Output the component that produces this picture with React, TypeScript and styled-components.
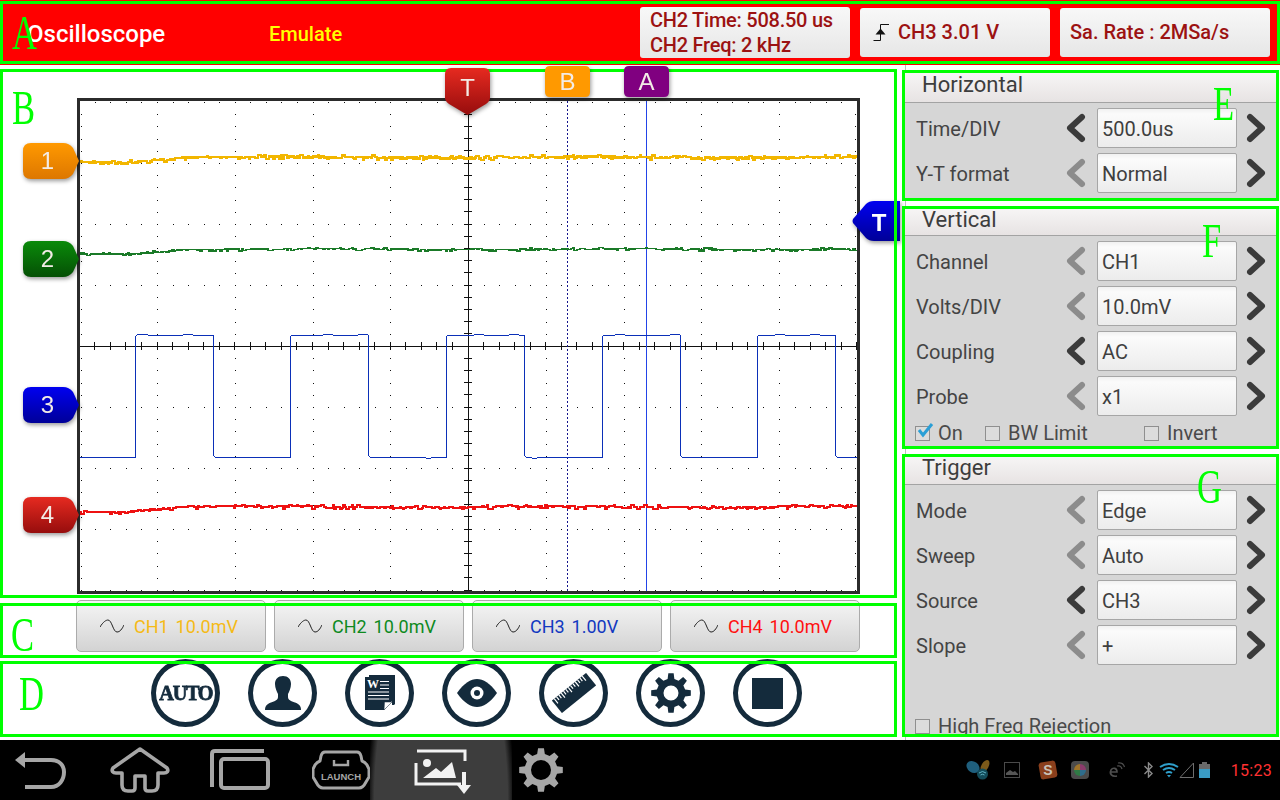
import React from "react";
import styled, { createGlobalStyle } from "styled-components";

const GlobalStyle = createGlobalStyle`
  html, body {
    margin: 0;
    padding: 0;
    background: #fff;
    font-family: Roboto, "Liberation Sans", sans-serif;
  }
`;

const DARK = "#142b3c";

// ---------- chart data ----------

const seeded = (seed: number) => {
  let s = seed;
  return () => {
    s = (s * 16807) % 2147483647;
    return s / 2147483647;
  };
};

const noisyTrace = (seed: number, start: number, end: number, spread: number) => {
  const rnd = seeded(seed);
  let d = `M80 ${start} `;
  let x = 80;
  while (x < 857) {
    const hold = 1 + Math.floor(rnd() * 3);
    const t = Math.min(1, Math.max(0, (x - 125) / 60));
    const wander = Math.sin(x / 47 + seed) * 0.5;
    let y = start + (end - start) * t + wander;
    const r = rnd();
    if (r > 0.9) y += spread * 2.4;
    else if (r < 0.1) y -= spread * 1.4;
    else if (r > 0.6) y += spread;
    const next = Math.min(857, x + hold);
    d += `L${x} ${y.toFixed(1)} L${next} ${y.toFixed(1)} `;
    x = next;
  }
  return d;
};

const squareTrace = () => {
  const edges = [135, 213, 290, 368, 446, 524, 602, 680, 757, 835];
  const rnd = seeded(77);
  let d = "M80 457 ";
  let high = false;
  let last = 80;
  const flat = (from: number, to: number, y: number) => {
    for (let x = from; x < to; x += 5) {
      d += `L${x} ${y + (rnd() > 0.8 ? (high ? -1 : 1) : 0)} `;
    }
    d += `L${to} ${y} `;
  };
  edges.forEach((x) => {
    flat(last + 3, x, high ? 335 : 457);
    if (high) d += `L${x} 455 L${x + 2} 457 `;
    else d += `L${x} 337 L${x + 2} 335 `;
    high = !high;
    last = x;
  });
  flat(last + 3, 857, high ? 335 : 457);
  return d;
};

const range = (from: number, to: number, step: number) => {
  const out: number[] = [];
  for (let v = from; v <= to; v += step) out.push(v);
  return out;
};

const CX = 468;
const CY = 346;
const STEP_X = 15.55;
const STEP_Y = 12.2;
const colsX = [-4, -3, -2, -1, 1, 2, 3, 4, 5].map((k) => CX + k * 77.75);
const rowsY = [-3, -2, -1, 1, 2, 3].map((k) => CY + k * 61);
const tickXs = range(-25, 25, 1).map((k) => CX + k * STEP_X).filter((x) => x > 81 && x < 857);
const tickYs = range(-20, 20, 1).map((k) => CY + k * STEP_Y).filter((y) => y > 102 && y < 592);

const dot = (x: number, y: number) => `M${Math.round(x)} ${Math.round(y)}h1v1h-1z `;

const gridDots = () => {
  let d = "";
  rowsY.concat([102, 590]).forEach((y) => tickXs.forEach((x) => (d += dot(x, y))));
  colsX.concat([81, 855]).forEach((x) => tickYs.forEach((y) => (d += dot(x, y))));
  return d;
};

const axisTicks = () => {
  let d = `M80 ${CY}H857 M${CX} 101V592 `;
  tickXs.forEach((x) => (d += `M${x.toFixed(1)} ${CY - 4}v8 `));
  tickYs.forEach((y) => (d += `M${CX - 4} ${y.toFixed(1)}h8 `));
  return d;
};

const gearPath = (cx: number, cy: number, ro: number, rb: number, hole: number, teeth = 8) => {
  let d = "";
  const seg = (Math.PI * 2) / teeth;
  for (let i = 0; i < teeth; i += 1) {
    const a = i * seg - Math.PI / 2;
    const pts: [number, number][] = [
      [rb, a - seg * 0.3],
      [ro, a - seg * 0.17],
      [ro, a + seg * 0.17],
      [rb, a + seg * 0.3],
    ];
    pts.forEach(([r, t], j) => {
      d += `${i === 0 && j === 0 ? "M" : "L"}${(cx + r * Math.cos(t)).toFixed(2)} ${(cy + r * Math.sin(t)).toFixed(2)} `;
    });
  }
  d += `Z M${cx + hole} ${cy} A${hole} ${hole} 0 1 0 ${cx - hole} ${cy} A${hole} ${hole} 0 1 0 ${cx + hole} ${cy} Z`;
  return d;
};

// ---------- page skeleton ----------

const Page = styled.div`
  width: 1280px;
  height: 800px;
  display: flex;
  flex-direction: column;
  overflow: hidden;
  background: #fff;
`;

const Region = styled.div`
  position: relative;

  &::after {
    content: "";
    position: absolute;
    inset: 0;
    border: 3px solid #00ff00;
    z-index: 1;
    pointer-events: none;
  }
`;

const Letter = styled.span<{ $left: number; $top: number }>`
  position: absolute;
  left: ${(p) => p.$left}px;
  top: ${(p) => p.$top}px;
  z-index: 3;
  font-family: "Liberation Serif", serif;
  font-size: 48px;
  line-height: 48px;
  color: #00ff00;
  transform: scaleX(0.72);
  transform-origin: left top;
`;

// ---------- top bar ----------

const TopBar = styled.header`
  height: 65px;
  flex: none;
  background: #ff0000;
  padding: 1px 0 1px;
  box-sizing: border-box;
`;

const TopRegion = styled(Region)`
  height: 63px;
  display: flex;
  align-items: center;
`;

const Title = styled.div`
  width: 269px;
  padding: 2px 0 0 27px;
  box-sizing: border-box;
  color: #fff;
  font-size: 24px;
  font-weight: 500;
`;

const Mode = styled.div`
  width: 371px;
  padding-top: 2px;
  box-sizing: border-box;
  color: #ffff00;
  font-size: 20px;
  font-weight: 500;
`;

const ReadoutRow = styled.div`
  display: flex;
  align-items: center;
  gap: 10px;
`;

const Readout = styled.div<{ $width: number; $height: number; $tight?: boolean }>`
  width: ${(p) => p.$width}px;
  height: ${(p) => p.$height}px;
  display: flex;
  flex-direction: column;
  justify-content: center;
  box-sizing: border-box;
  padding-left: 10px;
  border-radius: 3px;
  background: linear-gradient(#f8f8f8, #e6e6e6);
  color: #9c1212;
  font-size: 20px;
  line-height: 25px;
  font-weight: 500;
  letter-spacing: ${(p) => (p.$tight ? "-0.25px" : "0")};
  white-space: nowrap;
`;

const TriggerReadout = styled.div`
  display: flex;
  align-items: center;
  gap: 8px;
  padding-left: 3px;
`;

// ---------- left column ----------

const Body = styled.main`
  flex: 1;
  display: flex;
  min-height: 0;
`;

const LeftColumn = styled.section`
  width: 897px;
  flex: none;
  padding-top: 4px;
  box-sizing: border-box;
  display: flex;
  flex-direction: column;
`;

const ScopeRegion = styled(Region)`
  height: 529px;
  padding: 29px 0 0 77px;
  box-sizing: border-box;
`;

const Plot = styled.div`
  width: 783px;
  height: 496px;
  box-sizing: border-box;
  border: 3px solid #2b2b2b;
  background: #fff;

  svg {
    display: block;
  }
`;

const Marker = styled.div<{ $left: number; $top: number; $under?: boolean }>`
  position: absolute;
  left: ${(p) => p.$left}px;
  top: ${(p) => p.$top}px;
  z-index: ${(p) => (p.$under ? 0 : 2)};
  filter: drop-shadow(1px 2px 2px rgba(0, 0, 0, 0.4));
`;

const MarkerBody = styled.div<{
  $width: number;
  $height: number;
  $path: string;
  $from: string;
  $to: string;
  $inset?: string;
  $bold?: boolean;
}>`
  width: ${(p) => p.$width}px;
  height: ${(p) => p.$height}px;
  box-sizing: border-box;
  padding: ${(p) => p.$inset ?? "0"};
  clip-path: path("${(p) => p.$path}");
  background: linear-gradient(${(p) => p.$from}, ${(p) => p.$to});
  display: flex;
  align-items: center;
  justify-content: center;
  color: ${(p) => (p.$bold ? "#fff" : "#f3ece6")};
  font-family: "Liberation Sans", sans-serif;
  font-size: 24px;
  font-weight: ${(p) => (p.$bold ? 700 : 400)};
`;

const PENTAGON = "M8 0H40Q46 0 50 5L56 18L50 31Q46 36 40 36H8Q0 36 0 28V8Q0 0 8 0Z";
const SHIELD = "M6 0H39Q45 0 45 6V30Q45 33 41 36L22.5 47L4 36Q0 33 0 30V6Q0 0 6 0Z";
const TAB = "M5 0H40Q45 0 45 5V26Q45 31 40 31H5Q0 31 0 26V5Q0 0 5 0Z";
const LEFT_TAG = "M48 0V40H22Q17 40 14 37L1 22Q0 20 1 18L14 3Q17 0 22 0Z";

const ChannelRegion = styled(Region)`
  height: 55px;
  margin-top: 5px;
  padding-left: 76px;
  display: flex;
  gap: 8px;
  align-items: flex-start;
`;

const ChannelButton = styled.div<{ $color: string }>`
  width: 190px;
  height: 52px;
  margin-top: -3px;
  box-sizing: border-box;
  padding-left: 23px;
  display: flex;
  align-items: center;
  gap: 10px;
  border: 1px solid #ababab;
  border-radius: 5px;
  background: linear-gradient(#f5f5f5, #d3d3d3);
  color: ${(p) => p.$color};
  font-size: 18px;
  word-spacing: -1px;
  white-space: pre;
`;

const ActionRegion = styled(Region)`
  height: 76px;
  margin-top: 3px;
  padding-left: 151px;
  display: flex;
  gap: 28px;
  align-items: flex-start;
`;

const ActionButton = styled.div`
  width: 69px;
  height: 68px;
  margin-top: -2px;
  box-sizing: border-box;
  border: 5px solid ${DARK};
  border-radius: 50%;
  background: #fff;
  display: flex;
  align-items: center;
  justify-content: center;
  flex: none;
`;

const AutoLabel = styled.span`
  font-family: "Liberation Serif", serif;
  font-weight: 700;
  font-size: 22px;
  letter-spacing: -1.4px;
  color: ${DARK};
  -webkit-text-stroke: 0.8px ${DARK};
  transform: scaleX(0.92);
`;

// ---------- right column ----------

const RightColumn = styled.aside`
  width: 377px;
  margin-left: 5px;
  flex: none;
  padding-top: 5px;
  box-sizing: border-box;
  display: flex;
  flex-direction: column;
  gap: 5px;
  background: linear-gradient(#bdbdbd, #bdbdbd) 3px 0 / 1px 100% no-repeat;
`;

const Panel = styled(Region)<{ $height: number }>`
  height: ${(p) => p.$height}px;
  flex: none;
  background: #d6d6d6;
  overflow: hidden;
`;

const PanelHeader = styled.div<{ $height: number }>`
  height: ${(p) => p.$height}px;
  box-sizing: border-box;
  padding: 0 0 3px 20px;
  display: flex;
  align-items: center;
  background: linear-gradient(#f8f7f7, #e7e3e3);
  border-bottom: 1px solid #a3a3a3;
  color: #3d3d3d;
  font-size: 22px;
`;

const Rows = styled.div`
  padding: 5px 0 0 14px;
  display: flex;
  flex-direction: column;
  gap: 5px;
`;

const Row = styled.div`
  display: grid;
  grid-template-columns: 150px 31px 140px 29px;
  align-items: center;
  height: 40px;
  color: #444;
  font-size: 20px;

  > span {
    padding-top: 2px;
  }
`;

const Chevron = styled.svg<{ $off?: boolean; $right?: boolean }>`
  width: 20px;
  height: 30px;
  justify-self: ${(p) => (p.$right ? "end" : "start")};
  fill: none;
  stroke: ${(p) => (p.$off ? "#8c8c8c" : "#3b3b3b")};
  stroke-width: 6;
  stroke-linecap: round;
  stroke-linejoin: round;
`;

const ValueBox = styled.div`
  height: 40px;
  box-sizing: border-box;
  padding: 2px 0 0 4px;
  display: flex;
  align-items: center;
  border: 1px solid #a6a6a6;
  border-radius: 2px;
  background: linear-gradient(#f1f1f1 0, #fbfbfb 5px, #ececec 100%);
  color: #3f3f3f;
  font-size: 20px;
`;

const CheckRow = styled.div<{ $top: number; $columns: string }>`
  margin-top: ${(p) => p.$top}px;
  padding-left: 13px;
  display: grid;
  grid-template-columns: ${(p) => p.$columns};
  align-items: center;
  color: #4a4a4a;
  font-size: 20px;
  line-height: 20px;
`;

const CheckItem = styled.div`
  display: flex;
  align-items: center;
  gap: 8px;
  position: relative;
`;

const Box = styled.span`
  width: 15px;
  height: 15px;
  flex: none;
  box-sizing: border-box;
  border: 1px solid #8f8f8f;
  background: #dcdcdc;
`;

const Tick = styled.svg`
  position: absolute;
  left: 1px;
  top: -1px;
  width: 18px;
  height: 16px;
`;

// ---------- bottom navigation ----------

const NavBar = styled.nav`
  height: 60px;
  flex: none;
  background: #000;
  display: flex;
  align-items: center;
  padding-left: 14px;
  box-sizing: border-box;
  position: relative;
`;

const NavSlot = styled.div<{ $width: number; $active?: boolean; $pad?: number }>`
  width: ${(p) => p.$width}px;
  height: 60px;
  flex: none;
  box-sizing: border-box;
  padding-left: ${(p) => p.$pad ?? 0}px;
  display: flex;
  align-items: center;
  background: ${(p) =>
    p.$active
      ? "radial-gradient(ellipse 74px 200px at 71px 60px, #3d3d3d 90%, rgba(0,0,0,0) 100%)"
      : "none"};
`;

const Tray = styled.div`
  margin-left: auto;
  display: flex;
  align-items: center;
  padding-right: 8px;
`;

const TrayIcon = styled.svg<{ $gap: number }>`
  margin-left: ${(p) => p.$gap}px;
  flex: none;
  display: block;
`;

const Clock = styled.span`
  margin-left: 21px;
  color: #ff3131;
  font-size: 16px;
  letter-spacing: 0.3px;
`;

// ---------- drawings ----------

const SineIcon = () => (
  <svg width="24" height="14" viewBox="0 0 24 14" fill="none" stroke="#222" strokeWidth="1">
    <path d="M0 8 C3 3 6 1 8 1 C12 1 13 13 17 13 C20 13 22 10 24 6" />
  </svg>
);

const EdgeIcon = () => (
  <svg width="17" height="17" viewBox="0 0 17 17" fill="none">
    <path d="M0.5 16.5H7.5V0.5H16" stroke="#111" strokeWidth="1" />
    <path d="M2.5 10.5L7.5 4.5L12.5 10.5Z" fill="#111" />
  </svg>
);

const PersonIcon = () => (
  <svg width="36" height="34" viewBox="0 0 36 34" fill={DARK}>
    <path d="M18 0C23 0 26 3 26 8C26 12 24 16 23 18V21C23 24 26 25 30 26.5C34 28 36 30 36 34H0C0 30 2 28 6 26.5C10 25 13 24 13 21V18C12 16 10 12 10 8C10 3 13 0 18 0Z" />
  </svg>
);

const DocIcon = () => (
  <svg width="30" height="36" viewBox="0 0 30 36">
    <path d="M4 0H30V29L29 30H27V3H4Z" fill={DARK} />
    <path d="M0 2H27V26L19 35H0Z" fill={DARK} />
    <path d="M19 35L19.5 27H27Z" fill="#fff" stroke={DARK} strokeWidth="0.5" />
    <text x="2" y="13" fontFamily="Liberation Serif, serif" fontWeight="700" fontSize="12" fill="#fff">W</text>
    <path d="M15 6.5H24M15 10H24M15 13.5H24M3 17H24M3 20.5H24M3 24H24" stroke="#fff" strokeWidth="1.2" />
  </svg>
);

const EyeIcon = () => (
  <svg width="40" height="28" viewBox="0 0 40 28">
    <path d="M0 14C7 4 14 0 20 0C26 0 33 4 40 14C33 24 26 28 20 28C14 28 7 24 0 14Z" fill={DARK} />
    <circle cx="20" cy="14" r="6.5" fill="#fff" />
    <circle cx="20" cy="14" r="3" fill={DARK} />
  </svg>
);

const RulerIcon = () => (
  <svg width="44" height="40" viewBox="0 0 44 40">
    <g transform="rotate(-39 22 20)">
      <rect x="0" y="12" width="44" height="16" fill={DARK} />
      <path
        d="M3 12v6M6 12v4M9 12v4M12 12v6M15 12v4M18 12v4M21 12v6M24 12v4M27 12v4M30 12v6M33 12v4M36 12v4M39 12v6"
        stroke="#fff"
        strokeWidth="1.2"
      />
    </g>
  </svg>
);

const GearIcon = ({ size, color, ro, rb, hole }: { size: number; color: string; ro: number; rb: number; hole: number }) => (
  <svg width={size} height={size} viewBox={`0 0 ${size} ${size}`}>
    <path d={gearPath(size / 2, size / 2, ro, rb, hole)} fill={color} fillRule="evenodd" />
  </svg>
);

const StopSquare = styled.div`
  width: 31px;
  height: 31px;
  background: ${DARK};
`;

const NAV = "#a6a6a6";

const BackIcon = () => (
  <svg width="52" height="40" viewBox="0 0 52 40" fill="none">
    <path d="M1 10L11 2V18Z" fill={NAV} />
    <path d="M11 10H37C45 10 50 15 50 22C50 30 45 37 37 37H11" stroke={NAV} strokeWidth="4" />
  </svg>
);

const HomeIcon = () => (
  <svg width="60" height="46" viewBox="0 0 60 46" fill="none" stroke={NAV} strokeWidth="3.6" strokeLinejoin="round">
    <path d="M30 2L57 21C59 24 57 26 54 26H48V38C48 42 46 44 42 44H38C36 44 35 43 35 41V29H25V41C25 43 24 44 22 44H18C14 44 12 42 12 38V26H6C3 26 1 24 3 21Z" />
  </svg>
);

const RecentsIcon = () => (
  <svg width="60" height="42" viewBox="0 0 60 42" fill="none" stroke={NAV} strokeWidth="4">
    <path d="M54 2H5Q2 2 2 5V38" />
    <rect x="11" y="10" width="47" height="29" rx="3" />
  </svg>
);

const LaunchIcon = () => (
  <svg width="58" height="42" viewBox="0 0 58 42" fill="none">
    <path
      d="M13 3H45Q48 3 49 7L50 12Q53 13 55 16L57 20V28L54 33Q51 39 47 39H11Q7 39 4 33L1 28V20L3 16Q5 13 8 12L9 7Q10 3 13 3Z"
      stroke={NAV}
      strokeWidth="3"
      strokeLinejoin="round"
    />
    <path d="M22 11V16H36V11" stroke={NAV} strokeWidth="2.4" />
    <text x="29" y="31" textAnchor="middle" fontFamily="Liberation Sans, sans-serif" fontWeight="700" fontSize="9.5" fill={NAV}>
      LAUNCH
    </text>
  </svg>
);

const GalleryIcon = () => (
  <svg width="58" height="48" viewBox="0 0 58 48" fill="none">
    <path d="M3 5H51V15" stroke="#f2f2f2" strokeWidth="3" />
    <path d="M2 17V38H47" stroke="#f2f2f2" strokeWidth="3" />
    <circle cx="13" cy="17" r="4" fill="#f2f2f2" />
    <path d="M9 32L22 22L27 26L38 16L42 32Z" fill="#f2f2f2" />
    <path d="M50 26V40" stroke="#f2f2f2" strokeWidth="4" />
    <path d="M43 39H57L50 48Z" fill="#f2f2f2" />
  </svg>
);

const ButterflyIcon = () => (
  <TrayIcon $gap={0} width="24" height="20" viewBox="0 0 24 20">
    <ellipse cx="7" cy="7" rx="7" ry="5.5" transform="rotate(35 7 7)" fill="#1f5f7d" />
    <ellipse cx="19" cy="6" rx="3.6" ry="6.5" transform="rotate(30 19 6)" fill="#7c5a1a" />
    <circle cx="16.5" cy="14" r="5.5" fill="#134c5a" />
    <path d="M13 13Q16.5 10 20 13M14.5 15Q16.5 13.5 18.5 15" stroke="#5fb3c4" strokeWidth="1" fill="none" />
  </TrayIcon>
);

const PictureIcon = () => (
  <TrayIcon $gap={14} width="16" height="16" viewBox="0 0 16 16">
    <rect x="0.5" y="0.5" width="15" height="15" fill="none" stroke="#4a4a4a" />
    <path d="M2 13V11L6 8L9 10L11 9L14 12V13Z" fill="#555" />
  </TrayIcon>
);

const SogouIcon = () => (
  <TrayIcon $gap={18} width="20" height="20" viewBox="0 0 20 20">
    <rect x="1.5" y="1.5" width="17" height="17" rx="3" transform="rotate(-10 10 10)" fill="#8a3f1c" />
    <text x="10" y="15" textAnchor="middle" fontFamily="Liberation Sans, sans-serif" fontWeight="700" fontSize="14" fill="#c9c2b8">
      S
    </text>
  </TrayIcon>
);

const ColorIcon = () => (
  <TrayIcon $gap={13} width="18" height="18" viewBox="0 0 18 18">
    <rect width="18" height="18" rx="4" fill="#4c4c4c" />
    <path d="M9 3A6 6 0 0 1 15 9L9 9Z" fill="#8c3b6c" />
    <path d="M3 9A6 6 0 0 1 9 3L9 9Z" fill="#a0752a" />
    <path d="M3 9A6 6 0 0 0 9 15L9 9Z" fill="#2f7a45" />
    <path d="M15 9A6 6 0 0 1 9 15L9 9Z" fill="#2f6d8c" />
  </TrayIcon>
);

const BrowserIcon = () => (
  <TrayIcon $gap={18} width="18" height="18" viewBox="0 0 18 18" fill="none" stroke="#4e4e4e">
    <path d="M3 11H10C10 7 6 6 4 9C2 13 5 16 10 15" strokeWidth="1.6" />
    <path d="M10 5Q14 4 15 8M11 2Q16 1 17.5 6" strokeWidth="1.2" />
  </TrayIcon>
);

const BluetoothIcon = () => (
  <TrayIcon $gap={19} width="9" height="16" viewBox="0 0 9 16" fill="none" stroke="#8a8a8a" strokeWidth="1.4">
    <path d="M0.5 4L8 11.5L4.5 15V1L8 4.5L0.5 12" />
  </TrayIcon>
);

const WifiIcon = () => (
  <TrayIcon $gap={6} width="20" height="16" viewBox="0 0 20 16" fill="none" stroke="#2f9fcb" strokeWidth="2">
    <path d="M1 5Q10 -1 19 5M4 8Q10 4 16 8M7 11Q10 9 13 11" />
    <path d="M8 13L10 15.5L12 13Z" fill="#2f9fcb" stroke="none" />
  </TrayIcon>
);

const SignalIcon = () => (
  <TrayIcon $gap={0} width="15" height="16" viewBox="0 0 15 16" fill="none" stroke="#6e6e6e">
    <path d="M1 15.5H14.5V1Z" />
  </TrayIcon>
);

const BatteryIcon = () => (
  <TrayIcon $gap={5} width="11" height="16" viewBox="0 0 11 16">
    <rect x="3" y="0" width="5" height="2" fill="#6a6a6a" />
    <rect x="0" y="2" width="11" height="5" fill="#6a6a6a" />
    <rect x="0" y="7" width="11" height="9" fill="#3a9bc4" />
  </TrayIcon>
);

// ---------- data ----------

const traces = [
  { seed: 11, start: 162, end: 157, color: "#f2b600", width: 2.4, spread: 1 },
  { seed: 23, start: 254, end: 249, color: "#1a7a28", width: 1.5, spread: 0.7 },
  { seed: 37, start: 511, end: 506.5, color: "#ee1111", width: 2, spread: 1 },
];

const channelMarkers = [
  { label: "1", top: 74, from: "#ff9900", to: "#dd7700" },
  { label: "2", top: 172, from: "#0a8a0a", to: "#055005" },
  { label: "3", top: 318, from: "#0000f0", to: "#000098" },
  { label: "4", top: 428, from: "#e62a20", to: "#960d0d" },
];

const channels = [
  { text: "CH1  10.0mV", color: "#f5ba16" },
  { text: "CH2  10.0mV", color: "#0e8a1e" },
  { text: "CH3  1.00V", color: "#1238c0" },
  { text: "CH4  10.0mV", color: "#ff1010" },
];

type Setting = { label: string; value: string; leftOff?: boolean };

const horizontal: Setting[] = [
  { label: "Time/DIV", value: "500.0us" },
  { label: "Y-T format", value: "Normal", leftOff: true },
];

const vertical: Setting[] = [
  { label: "Channel", value: "CH1", leftOff: true },
  { label: "Volts/DIV", value: "10.0mV", leftOff: true },
  { label: "Coupling", value: "AC" },
  { label: "Probe", value: "x1", leftOff: true },
];

const trigger: Setting[] = [
  { label: "Mode", value: "Edge", leftOff: true },
  { label: "Sweep", value: "Auto", leftOff: true },
  { label: "Source", value: "CH3" },
  { label: "Slope", value: "+", leftOff: true },
];

const SettingRows = ({ items }: { items: Setting[] }) => (
  <Rows>
    {items.map((item) => (
      <Row key={item.label}>
        <span>{item.label}</span>
        <Chevron viewBox="0 0 20 30" $off={item.leftOff}>
          <polyline points="16,4 4,15 16,26" />
        </Chevron>
        <ValueBox>{item.value}</ValueBox>
        <Chevron viewBox="0 0 20 30" $right>
          <polyline points="4,4 16,15 4,26" />
        </Chevron>
      </Row>
    ))}
  </Rows>
);

export default function App() {
  return (
    <Page>
      <GlobalStyle />
      <TopBar>
        <TopRegion>
          <Letter $left={12} $top={8}>A</Letter>
          <Title>Oscilloscope</Title>
          <Mode>Emulate</Mode>
          <ReadoutRow>
            <Readout $width={210} $height={51} $tight>
              <div>CH2 Time: 508.50 us</div>
              <div>CH2 Freq: 2 kHz</div>
            </Readout>
            <Readout $width={190} $height={49}>
              <TriggerReadout>
                <EdgeIcon />
                <span>CH3 3.01 V</span>
              </TriggerReadout>
            </Readout>
            <Readout $width={210} $height={49}>Sa. Rate : 2MSa/s</Readout>
          </ReadoutRow>
        </TopRegion>
      </TopBar>

      <Body>
        <LeftColumn>
          <ScopeRegion>
            <Letter $left={12} $top={15}>B</Letter>
            <Plot>
              <svg width="777" height="490" viewBox="80 101 777 490" fill="none">
                <path d={gridDots()} fill="#111" stroke="none" shapeRendering="crispEdges" />
                <path d={axisTicks()} stroke="#111" strokeWidth="1" shapeRendering="crispEdges" />
                <path d="M567 101V592" stroke="#14148c" strokeWidth="1" strokeDasharray="2 2" shapeRendering="crispEdges" />
                <path d="M646.5 101V592" stroke="#2244e8" strokeWidth="1" />
                {traces.map((t) => (
                  <path
                    key={t.seed}
                    d={noisyTrace(t.seed, t.start, t.end, t.spread)}
                    stroke={t.color}
                    strokeWidth={t.width}
                    shapeRendering="crispEdges"
                  />
                ))}
                <path d={squareTrace()} stroke="#0b30b8" strokeWidth="1" shapeRendering="crispEdges" />
              </svg>
            </Plot>

            {channelMarkers.map((m) => (
              <Marker key={m.label} $left={23} $top={m.top}>
                <MarkerBody $width={56} $height={36} $path={PENTAGON} $from={m.from} $to={m.to} $inset="0 7px 0 0">
                  {m.label}
                </MarkerBody>
              </Marker>
            ))}
            <Marker $left={445} $top={-1}>
              <MarkerBody $width={45} $height={47} $path={SHIELD} $from="#e62a20" $to="#960d0d" $inset="0 0 8px 0">
                T
              </MarkerBody>
            </Marker>
            <Marker $left={545} $top={-3}>
              <MarkerBody $width={45} $height={31} $path={TAB} $from="#ff9900" $to="#ff9900">B</MarkerBody>
            </Marker>
            <Marker $left={624} $top={-3}>
              <MarkerBody $width={45} $height={31} $path={TAB} $from="#800080" $to="#800080">A</MarkerBody>
            </Marker>
            <Marker $left={852} $top={132} $under>
              <MarkerBody $width={48} $height={40} $path={LEFT_TAG} $from="#0000f0" $to="#000098" $inset="3px 0 0 6px" $bold>
                T
              </MarkerBody>
            </Marker>
          </ScopeRegion>

          <ChannelRegion>
            <Letter $left={11} $top={8}>C</Letter>
            {channels.map((c) => (
              <ChannelButton key={c.text} $color={c.color}>
                <SineIcon />
                {c.text}
              </ChannelButton>
            ))}
          </ChannelRegion>

          <ActionRegion>
            <Letter $left={19} $top={9}>D</Letter>
            <ActionButton><AutoLabel>AUTO</AutoLabel></ActionButton>
            <ActionButton><PersonIcon /></ActionButton>
            <ActionButton><DocIcon /></ActionButton>
            <ActionButton><EyeIcon /></ActionButton>
            <ActionButton><RulerIcon /></ActionButton>
            <ActionButton><GearIcon size={40} color={DARK} ro={20} rb={14.5} hole={7.5} /></ActionButton>
            <ActionButton><StopSquare /></ActionButton>
          </ActionRegion>
        </LeftColumn>

        <RightColumn>
          <Panel $height={131}>
            <Letter $left={311} $top={10}>E</Letter>
            <PanelHeader $height={33}>Horizontal</PanelHeader>
            <SettingRows items={horizontal} />
          </Panel>

          <Panel $height={243}>
            <Letter $left={300} $top={11}>F</Letter>
            <PanelHeader $height={30}>Vertical</PanelHeader>
            <SettingRows items={vertical} />
            <CheckRow $top={7} $columns="70px 159px auto">
              <CheckItem>
                <Box />
                <Tick viewBox="0 0 18 16">
                  <path d="M3 8L7 13L16 2" fill="none" stroke="#2a9fd6" strokeWidth="3" />
                </Tick>
                <span>On</span>
              </CheckItem>
              <CheckItem><Box /><span>BW Limit</span></CheckItem>
              <CheckItem><Box /><span>Invert</span></CheckItem>
            </CheckRow>
          </Panel>

          <Panel $height={283}>
            <Letter $left={295} $top={9}>G</Letter>
            <PanelHeader $height={31}>Trigger</PanelHeader>
            <SettingRows items={trigger} />
            <CheckRow $top={51} $columns="auto">
              <CheckItem><Box /><span>High Freq Rejection</span></CheckItem>
            </CheckRow>
          </Panel>
        </RightColumn>
      </Body>

      <NavBar>
        <NavSlot $width={96}><BackIcon /></NavSlot>
        <NavSlot $width={100}><HomeIcon /></NavSlot>
        <NavSlot $width={102}><RecentsIcon /></NavSlot>
        <NavSlot $width={58}><LaunchIcon /></NavSlot>
        <NavSlot $width={142} $active $pad={44}><GalleryIcon /></NavSlot>
        <NavSlot $width={60} $pad={7}><GearIcon size={44} color={NAV} ro={22} rb={16.5} hole={10} /></NavSlot>
        <Tray>
          <ButterflyIcon />
          <PictureIcon />
          <SogouIcon />
          <ColorIcon />
          <BrowserIcon />
          <BluetoothIcon />
          <WifiIcon />
          <SignalIcon />
          <BatteryIcon />
          <Clock>15:23</Clock>
        </Tray>
      </NavBar>
    </Page>
  );
}
